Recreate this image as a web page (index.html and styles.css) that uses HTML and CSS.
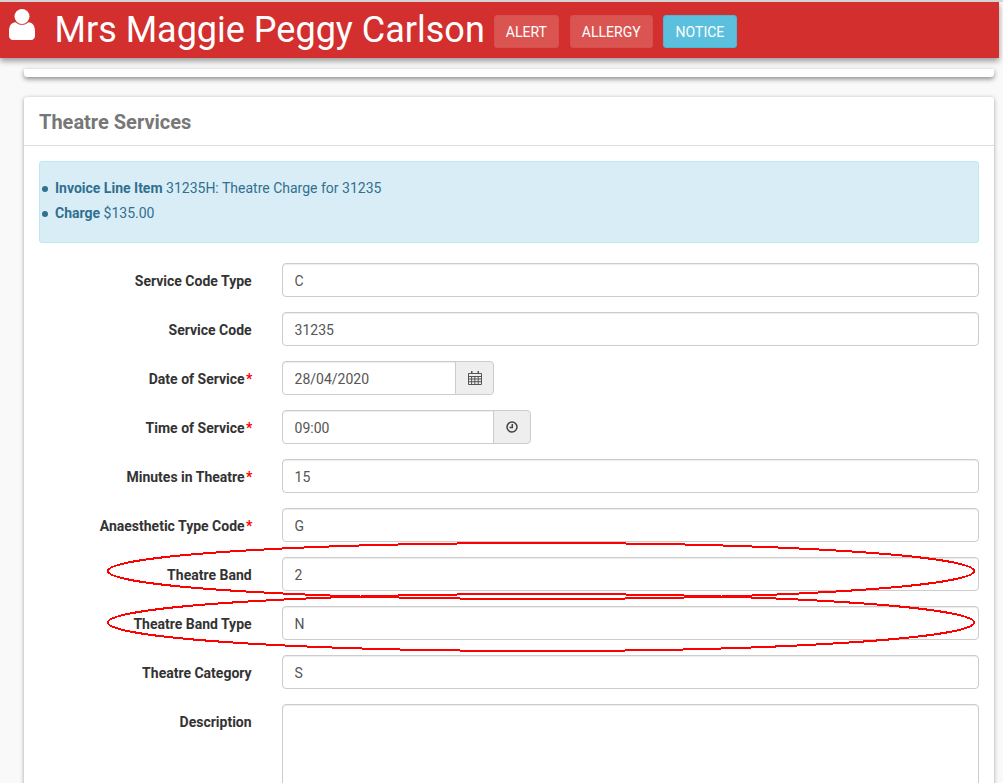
FILE: index.html
```html
<!DOCTYPE html>
<html lang="en">
<head>
<meta charset="utf-8">
<title>Theatre Services</title>
<link rel="stylesheet" href="styles.css">
</head>
<body>
<header class="patient-bar">
  <svg class="user-icon" viewBox="0 0 26 31" aria-hidden="true"><circle cx="13" cy="7.500" r="7.500"/><path d="M6.500 13.200C8.300 14.900 10.500 15.800 13 15.800s4.700-.9 6.500-2.600C23.600 13.600 26 16.600 26 22.500V27c0 2.300-1.700 4-4 4H4c-2.300 0-4-1.700-4-4v-4.500C0 16.600 2.400 13.600 6.500 13.200Z"/></svg>
  <h1 class="patient-name">Mrs Maggie Peggy Carlson</h1>
  <div class="tags">
    <span class="tag tag-alert">ALERT</span>
    <span class="tag tag-allergy">ALLERGY</span>
    <span class="tag tag-notice">NOTICE</span>
  </div>
</header>
<main class="content">
  <div class="card-stub"></div>
  <section class="card">
    <h2 class="card-title">Theatre Services</h2>
    <div class="card-body">
      <div class="alert">
        <ul class="alert-list">
          <li><b>Invoice Line Item</b> 31235H: Theatre Charge for 31235</li>
          <li><b>Charge</b> $135.00</li>
        </ul>
      </div>
      <form class="form">
        <label class="field-label">Service Code Type</label>
        <input class="input" value="C">
        <label class="field-label">Service Code</label>
        <input class="input" value="31235">
        <label class="field-label req">Date of Service<i>*</i></label>
        <div class="group group-date">
          <input class="input" value="28/04/2020">
          <span class="addon"><svg viewBox="0 0 14 14" width="14" height="14" aria-hidden="true"><path class="cal" d="M3 0h1.500v3H3ZM9.500 0H11v3H9.500Z"/><path class="cal-line" d="M.5 2.500h13v11H.5ZM.5 5.500h13M.5 8h13M.5 10.700h13M3.600 5.500v8M6.800 5.500v8M10.200 5.500v8"/></svg></span>
        </div>
        <label class="field-label req">Time of Service<i>*</i></label>
        <div class="group group-time">
          <input class="input" value="09:00">
          <span class="addon"><svg viewBox="0 0 12 12" width="12" height="12" aria-hidden="true"><circle class="clock" cx="6" cy="6" r="5"/><path class="clock" d="M6.300 3v3.400H3.500"/></svg></span>
        </div>
        <label class="field-label req">Minutes in Theatre<i>*</i></label>
        <input class="input" value="15">
        <label class="field-label req">Anaesthetic Type Code<i>*</i></label>
        <input class="input" value="G">
        <label class="field-label">Theatre Band</label>
        <input class="input" value="2">
        <label class="field-label">Theatre Band Type</label>
        <input class="input" value="N">
        <label class="field-label">Theatre Category</label>
        <input class="input" value="S">
        <label class="field-label">Description</label>
        <textarea class="input textarea"></textarea>
      </form>
    </div>
  </section>
</main>
<svg class="annotations" viewBox="0 0 1003 783" aria-hidden="true">
  <ellipse cx="541" cy="571" rx="433" ry="28"/>
  <ellipse cx="541" cy="622.500" rx="433" ry="28.500"/>
</svg>
</body>
</html>
```

FILE: styles.css
```css
* { box-sizing: border-box; }
html, body { height: 100%; }
body {
  margin: 0;
  height: 783px;
  overflow: hidden;
  position: relative;
  background: #f9f9f9;
  border-top: 2px solid #d4d4d4;
  font-family: Roboto, "Liberation Sans", sans-serif;
  font-size: 14px;
  color: #333;
}
.patient-bar {
  position: relative;
  z-index: 2;
  display: flex;
  align-items: center;
  width: 999px;
  height: 56px;
  background: #d32f2f;
  box-shadow: 0 3px 6px rgba(0, 0, 0, .4);
  padding-left: 9px;
  color: #fff;
}
.user-icon { width: 26px; height: 31px; fill: #fff; flex: none; margin-top: -11px; }
.patient-name {
  margin: 0 0 0 19.500px;
  font-size: 36px;
  font-weight: 400;
  line-height: 56px;
  white-space: nowrap;
}
.tags { display: flex; gap: 10px; margin-left: 9px; margin-top: 3px; }
.tag {
  height: 33px;
  padding: 0 11px;
  border-radius: 3px;
  font-size: 14px;
  background: #da5552;
  border: 1px solid #d94f4d;
  line-height: 32px;
}
.tag-allergy { margin-left: 1px; }
.tag-notice { padding: 0 12px; background: #5bc0de; border-color: #46b8da; }
.content { padding: 11px 9px 0 24px; }
.card-stub {
  height: 8px;
  background: #fff;
  border-radius: 0 0 3px 3px;
  box-shadow: 0 2px 5px rgba(0, 0, 0, .45);
}
.card {
  margin-top: 20px;
  background: #fff;
  border-radius: 3px;
  box-shadow: 0 1px 4px rgba(0, 0, 0, .35);
}
.card-title {
  margin: 0;
  height: 49px;
  padding: 0 15px;
  border-bottom: 1px solid #ddd;
  font-size: 20px;
  font-weight: 700;
  line-height: 50px;
  color: #777;
}
.card-body { padding: 15px; }
.alert {
  height: 82px;
  padding: 14px 0 0 15px;
  background: #d9edf7;
  border: 1px solid #bce8f1;
  border-radius: 3px;
  color: #31708f;
}
.alert-list { margin: 0; padding: 0; list-style: none; }
.alert-list li { position: relative; line-height: 25px; }
.alert-list li::before {
  content: "";
  position: absolute;
  left: -13px;
  top: 10px;
  width: 6px;
  height: 6px;
  border-radius: 50%;
  background: #31708f;
}
.form {
  display: grid;
  grid-template-columns: 213px 697px;
  column-gap: 30px;
  row-gap: 15px;
  margin-top: 20px;
}
.field-label {
  font-weight: 700;
  text-align: right;
  line-height: 20px;
  padding: 8px 0.400px 0 0;
  white-space: nowrap;
  color: #333;
}
.field-label i {
  display: inline-block;
  width: 7px;
  margin: 0 -1px 0 1px;
  font-style: normal;
  color: #f00;
  text-align: center;
}
.input {
  display: block;
  width: 100%;
  height: 34px;
  padding: 7px 12px 5px 11.600px;
  border: 1px solid #ccc;
  border-radius: 4px;
  background: #fff;
  box-shadow: inset 0 1px 1px rgba(0, 0, 0, .075);
  font-family: inherit;
  font-size: 14px;
  color: #555;
  outline: none;
}
.textarea { height: 120px; resize: none; }
.group { display: flex; }
.group-date { width: 212px; }
.group-time { width: 249px; }
.group .input { flex: 1; min-width: 0; border-radius: 4px 0 0 4px; }
.addon {
  flex: none;
  display: flex;
  align-items: center;
  justify-content: center;
  width: 38px;
  margin-left: -1px;
  background: #eee;
  border: 1px solid #ccc;
  border-radius: 0 4px 4px 0;
}
.group-date .addon { width: 39px; }
.cal { fill: #555; }
.cal-line { fill: none; stroke: #555; stroke-width: 1; }
.clock { fill: none; stroke: #444; stroke-width: 1.500; }
.annotations {
  position: absolute;
  left: 0;
  top: -2px;
  width: 1003px;
  height: 783px;
  z-index: 3;
  pointer-events: none;
}
.annotations ellipse {
  fill: none;
  stroke: #f00;
  stroke-width: 2;
  shape-rendering: crispEdges;
}
```
